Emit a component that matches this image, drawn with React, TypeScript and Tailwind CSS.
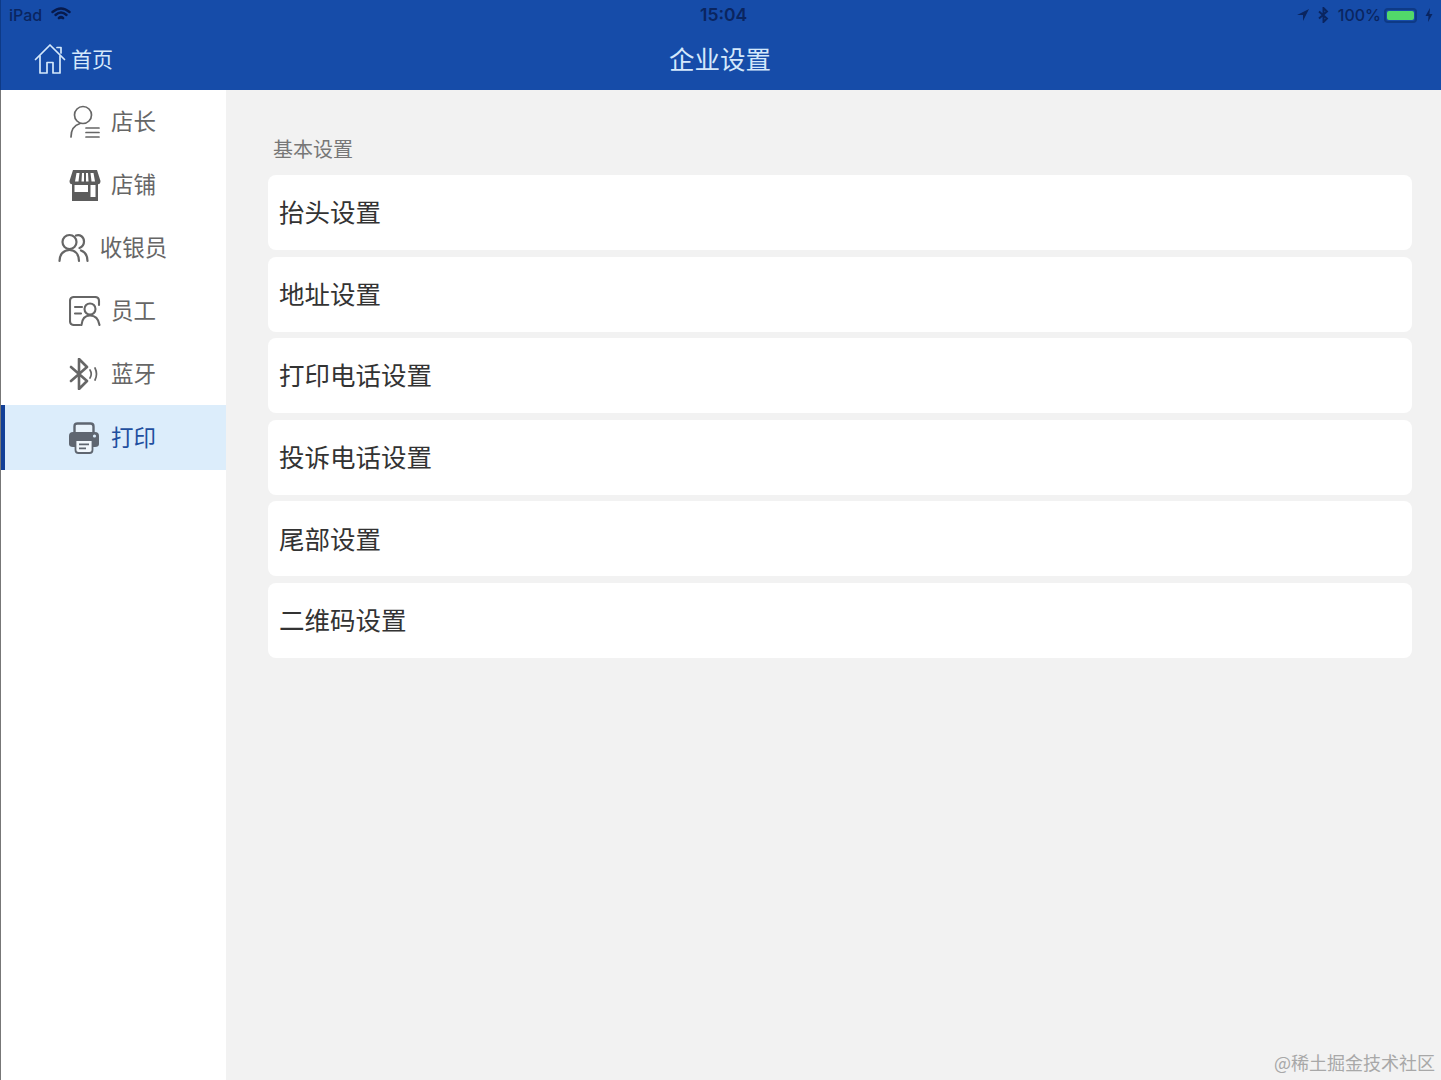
import React from "react";

const Font = '"Noto Sans CJK SC", "Noto Sans", sans-serif';

function HomeIcon() {
  return (
    <svg width="32" height="32" viewBox="0 0 32 32" fill="none" stroke="#d4e8fb" strokeWidth="1.7" strokeLinejoin="round" strokeLinecap="round">
      <path d="M1.5 16.5 L16 2 L30.5 16.5" />
      <path d="M23 4.5 H27 V10" />
      <path d="M6 13 V30 H13 V19.5 H19 V30 H26 V13" />
    </svg>
  );
}
function ManagerIcon() {
  return (
    <svg width="32" height="34" viewBox="0 0 32 34" fill="none" stroke="#666" strokeWidth="1.7" strokeLinecap="round">
      <circle cx="14" cy="10" r="8.5" />
      <path d="M2 32 C2 24 6 20 11 18.5" />
      <path d="M17 23 H30 M17 27.5 H30 M17 32 H30" />
    </svg>
  );
}
function StoreIcon() {
  return (
    <svg width="32" height="32" viewBox="0 0 32 32" fill="#5c5c5c">
      <path d="M4 1 H28 L31.5 12 C31.5 15 29.5 15.5 29 15 V32 H3 V15 C2.5 15.5 0.5 15 0.5 12 Z" />
      <path fill="#fff" d="M7.5 4 H10.5 L9.5 12.5 H6 Z M13 4 H15 V12.5 H12.5 Z M17 4 H19 L19.5 12.5 H17 Z M21.5 4 H24.5 L26 12.5 H22.5 Z" />
      <path fill="#fff" d="M5.5 16 H19 V23 H5.5 Z M21.5 16 H26.5 V28 H21.5 Z" />
    </svg>
  );
}
function CashierIcon() {
  return (
    <svg width="31" height="30" viewBox="0 0 31 30" fill="none" stroke="#666" strokeWidth="2.2" strokeLinecap="round">
      <circle cx="11.5" cy="9" r="7" />
      <path d="M1.5 28 C1.5 21 6 17 11.5 17 C17 17 21 21 21 28" />
      <path d="M18 2.5 C22 1 26 4 26 8.5 C26 11.5 24 14 21.5 15" />
      <path d="M23 17.5 C27 19 29.5 23 29.5 28" />
    </svg>
  );
}
function StaffIcon() {
  return (
    <svg width="32" height="30" viewBox="0 0 32 30" fill="none" stroke="#666" strokeWidth="2.1" strokeLinecap="round">
      <path d="M11 29 H5 Q1 29 1 25 V5 Q1 1 5 1 H26 Q30 1 30 5 V9" />
      <path d="M6 11 H13 M6 17.5 H12" />
      <circle cx="21" cy="13" r="5.5" />
      <path d="M12.5 29 C13 23 16 19.5 21 19.5 C26 19.5 29.5 23 30.5 29" />
    </svg>
  );
}
function BluetoothIcon() {
  return (
    <svg width="30" height="32" viewBox="0 0 30 32" fill="none" stroke="#666" strokeWidth="2.6" strokeLinecap="round" strokeLinejoin="round">
      <path d="M2 9 L18 23 L10 31 V1 L18 9 L2 23" />
      <path d="M21 12 Q23.5 16 21 20" strokeWidth="1.7" />
      <path d="M26 10 Q29 16 26 22" strokeWidth="1.7" />
    </svg>
  );
}
function PrintIcon() {
  return (
    <svg width="32" height="32" viewBox="0 0 32 32" fill="#5f6670">
      <path d="M6.5 11 V4.5 Q6.5 1.5 9.5 1.5 H22.5 Q25.5 1.5 25.5 4.5 V11" fill="#e9f3fb" stroke="#5f6670" strokeWidth="2.4" />
      <path d="M5 10 H27 Q31 10 31 14 V22 Q31 25 27 25 H5 Q1 25 1 22 V14 Q1 10 5 10 Z" />
      <path d="M7.5 18 H24.5 V28 Q24.5 31 21.5 31 H10.5 Q7.5 31 7.5 28 Z" fill="#f2f8fd" stroke="#5f6670" strokeWidth="1.8" />
      <circle cx="26.5" cy="14" r="1.6" fill="#dcedfb" />
      <path d="M11 21.5 H21 V23.2 H11 Z M11 25.5 H18 V27.2 H11 Z" />
    </svg>
  );
}

const sideItems: { label: string; icon: React.ReactNode; active?: boolean; gap: string }[] = [
  { label: "店长", icon: <ManagerIcon />, gap: "gap-[10px]" },
  { label: "店铺", icon: <StoreIcon />, gap: "gap-[10px]" },
  { label: "收银员", icon: <CashierIcon />, gap: "gap-[11px]" },
  { label: "员工", icon: <StaffIcon />, gap: "gap-[10px]" },
  { label: "蓝牙", icon: <BluetoothIcon />, gap: "gap-[12px]" },
  { label: "打印", icon: <PrintIcon />, active: true, gap: "gap-[11px]" },
];

const rows = ["抬头设置", "地址设置", "打印电话设置", "投诉电话设置", "尾部设置", "二维码设置"];

const statusFont = { fontFamily: '"Inter", "Liberation Sans", sans-serif' };

export default function App() {
  return (
    <div className="relative flex h-[1080px] w-[1441px] flex-col overflow-hidden bg-[#f2f2f2]" style={{ fontFamily: Font }}>
      <header className="h-[90px] shrink-0 bg-[#164ca9] border-l border-[#0e3a86]">
        <div className="relative flex h-[30px] items-center justify-between pl-[8px] pr-[8px] text-[#0a2560]">
          <div className="flex items-center gap-[9px]">
            <span className="text-[16px] leading-none font-medium" style={statusFont}>iPad</span>
            <svg width="20" height="14" viewBox="0 0 20 14" className="-mt-[3px]" fill="none" stroke="#071a4c" strokeLinecap="round">
              <path d="M1.5 5 Q10 -2 18.5 5" strokeWidth="2.4" />
              <path d="M4.5 8 Q10 3 15.5 8" strokeWidth="2.4" />
              <path d="M8 11 Q10 9.5 12 11" strokeWidth="2.8" />
            </svg>
          </div>
          <span className="absolute left-[699px] text-[17.5px] leading-none font-semibold" style={statusFont}>15:04</span>
          <div className="flex items-center">
            <svg width="14" height="14" viewBox="0 0 14 14" fill="#0a2560" className="mr-[8px]"><path d="M13 1 L1 7 H7 V13 Z" /></svg>
            <svg width="11" height="16" viewBox="0 0 11 16" fill="none" stroke="#0a2560" strokeWidth="1.9" className="mr-[9px]"><path d="M1 4.5 L9 11.5 L5.5 15 V1 L9 4.5 L1 11.5" /></svg>
            <span className="mr-[3px] text-[16px] leading-none font-medium" style={statusFont}>100%</span>
            <div className="mr-[8px] h-[15px] w-[33px] rounded-[4px] border-2 border-[#0e3a86] p-[1px]">
              <div className="h-full w-full rounded-[2px] bg-[#52d96a]" />
            </div>
            <svg width="8" height="14" viewBox="0 0 8 14" fill="#0a2560"><path d="M5 0 L0.5 8 H3.5 L3 14 L7.5 6 H4.5 Z" /></svg>
          </div>
        </div>
        <div className="relative flex h-[60px] items-center justify-center pb-[5px] pr-[2px]">
          <div className="absolute left-[33px] top-[13px] flex items-center gap-[5px]">
            <HomeIcon />
            <span className="-mt-[2px] text-[21px] leading-none text-[#d4e8fb]">首页</span>
          </div>
          <span className="text-[25.5px] leading-none text-[#d4e8fb]">企业设置</span>
        </div>
      </header>

      <div className="flex min-h-0 flex-1">
        <aside className="w-[226px] shrink-0 bg-white border-l border-[#777]">
          {sideItems.map((it) => (
            <div
              key={it.label}
              className={
                it.active
                  ? `flex h-[65px] items-center justify-center border-l-[4px] border-[#123f97] bg-[#dcedfb] pr-[7px] text-[#1f4f9f] ${it.gap}`
                  : `flex h-[63px] items-center justify-center pr-[2px] text-[#666] ${it.gap}`
              }
            >
              {it.icon}
              <span className="-mt-[2px] text-[22.5px] leading-none">{it.label}</span>
            </div>
          ))}
        </aside>

        <main className="min-w-0 flex-1 pl-[42px] pr-[29px] pt-[47px]">
          <h2 className="ml-[5px] mb-[14px] text-[20px] leading-[24px] font-normal text-[#777]">基本设置</h2>
          <div className="flex flex-col gap-[6.6px]">
            {rows.map((r) => (
              <div key={r} className="flex h-[75px] items-center rounded-[8px] bg-white pb-[3px] pl-[11px] text-[25.5px] leading-none text-[#333]">
                {r}
              </div>
            ))}
          </div>
        </main>
      </div>

      <div className="absolute bottom-[7px] right-[6px] text-[18px] leading-[22px] text-[#a8a8a8]">@稀土掘金技术社区</div>
    </div>
  );
}
